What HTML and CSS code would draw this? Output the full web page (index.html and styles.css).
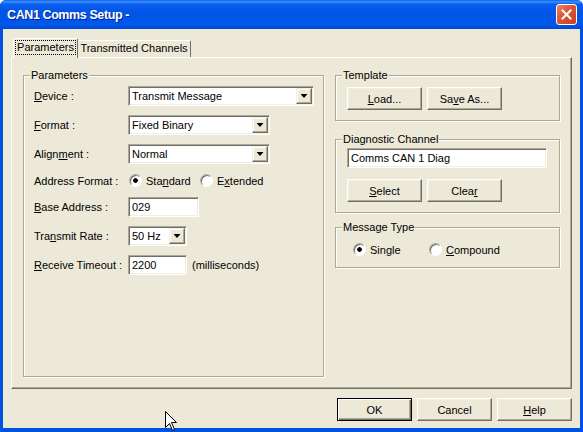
FILE: index.html
```html
<!DOCTYPE html>
<html lang="en">
<head>
  <meta charset="UTF-8" />
  <title>CAN1 Comms Setup</title>
  <link rel="stylesheet" href="styles.css">
</head>
<body>

<div class="window">

  <!-- Title bar -->
  <div class="titlebar">
    <span class="title">CAN1 Comms Setup -</span>
    <span class="close">
      <svg width="11" height="11" viewBox="0 0 11 11">
        <path d="M1.5 1.5 L9.5 9.5 M9.5 1.5 L1.5 9.5" stroke="#fff" stroke-width="2" stroke-linecap="square"/>
      </svg>
    </span>
  </div>

  <div class="client">

    <div class="tabs">
      <div class="tab tab--active"><span class="focus">Parameters</span></div>
      <div class="tab tab--channels">Transmitted Channels</div>
    </div>

    <div class="panel">

      <fieldset class="group group--params">
        <legend>Parameters</legend>
        <div class="form">
          <label><u>D</u>evice :</label>
          <div class="combo combo--device"><span>Transmit Message</span><span class="drop"></span></div>

          <label><u>F</u>ormat :</label>
          <div class="combo combo--format"><span>Fixed Binary</span><span class="drop"></span></div>

          <label>Align<u>m</u>ent :</label>
          <div class="combo combo--format"><span>Normal</span><span class="drop"></span></div>

          <label>Address Format :</label>
          <div class="radios radios--address">
            <span class="radio radio--on"><i></i><span>Sta<u>n</u>dard</span></span>
            <span class="radio"><i></i><span>E<u>x</u>tended</span></span>
          </div>

          <label><u>B</u>ase Address :</label>
          <div><input class="field field--base" type="text" value="029"></div>

          <label>Tra<u>n</u>smit Rate :</label>
          <div class="combo combo--rate"><span>50 Hz</span><span class="drop"></span></div>

          <label><u>R</u>eceive Timeout :</label>
          <div class="inline">
            <input class="field field--timeout" type="text" value="2200">
            <span>(milliseconds)</span>
          </div>
        </div>
      </fieldset>

      <div class="side">
        <fieldset class="group">
          <legend>Template</legend>
          <div class="group__body group__body--template">
            <button class="btn"><u>L</u>oad...</button>
            <button class="btn">Sa<u>v</u>e As...</button>
          </div>
        </fieldset>

        <fieldset class="group group--diag">
          <legend>Diagnostic Channel</legend>
          <div class="group__body group__body--diag">
            <input class="field field--diag" type="text" value="Comms CAN 1 Diag">
            <div class="btn-row">
              <button class="btn"><u>S</u>elect</button>
              <button class="btn">Clea<u>r</u></button>
            </div>
          </div>
        </fieldset>

        <fieldset class="group group--msg">
          <legend>Message Type</legend>
          <div class="group__body group__body--msg radios radios--msg">
            <span class="radio radio--on"><i></i><span>Sin<u>g</u>le</span></span>
            <span class="radio"><i></i><span><u>C</u>ompound</span></span>
          </div>
        </fieldset>
      </div>

    </div>

    <div class="actions">
      <button class="btn btn--default">OK</button>
      <button class="btn">Cancel</button>
      <button class="btn"><u>H</u>elp</button>
    </div>

  </div>

  <!-- mouse pointer -->
  <svg class="cursor" width="13" height="21" viewBox="0 0 13 21">
    <path d="M0.5 0.5 L0.5 16.5 L4.5 12.5 L7.5 19.5 L9.5 18.5 L6.5 11.5 L11.5 11.5 Z" fill="#fff" stroke="#000" stroke-width="1"/>
  </svg>

</div>

</body>
</html>
```

FILE: styles.css
```css
* {
  box-sizing: border-box;
}

body {
  margin: 0;
  width: 583px;
  height: 432px;
  overflow: hidden;
  background: #fff;
  font-family: "Liberation Sans", Arial, sans-serif;
  font-size: 11px;
  color: #000;
}

.window {
  position: relative;
  width: 583px;
  height: 432px;
  display: flex;
  flex-direction: column;
  background: #0053e1;
  border-radius: 6px 6px 0 0;
  overflow: hidden;
}

/* title bar */
.titlebar {
  height: 29px;
  flex-shrink: 0;
  display: flex;
  align-items: center;
  justify-content: space-between;
  padding: 0 6px 0 7px;
  background: linear-gradient(to bottom, #0a62f0 0%, #3d8ff8 6%, #0b5eef 14%, #0055e5 45%, #0057ea 85%, #0048d2 100%);
}

.title {
  color: #fff;
  font-weight: bold;
  font-size: 12.5px;
  letter-spacing: -0.4px;
  text-shadow: 1px 1px 0 #0a1f8c;
}

.close {
  width: 21px;
  height: 21px;
  display: flex;
  align-items: center;
  justify-content: center;
  border: 1px solid #fff;
  border-radius: 3px;
  background: linear-gradient(135deg, #e88463 0%, #dd5532 45%, #c7401e 100%);
}

/* dialog body */
.client {
  flex: 1;
  margin: 0 3px 4px;
  padding: 9px 8px 7px;
  background: #ece9d8;
  display: flex;
  flex-direction: column;
}

.tabs {
  height: 19px;
  display: flex;
  align-items: flex-end;
  padding-left: 2px;
  position: relative;
  z-index: 1;
}

.tab {
  height: 17px;
  line-height: 15px;
  text-align: center;
  background: #ece9d8;
  border: 1px solid;
  border-color: #fff #716f64 transparent #fff;
  border-bottom: none;
  border-radius: 2px 2px 0 0;
}

.tab--active {
  width: 65px;
  height: 20px;
  margin-bottom: -1px;
  padding: 1px 1px 0;
}

.tab--channels {
  width: 113px;
  border-left: none;
}

.focus {
  display: block;
  height: 15px;
  line-height: 13px;
  border: 1px dotted #000;
}

.panel {
  height: 332px;
  display: flex;
  gap: 11px;
  padding: 11px;
  border: 1px solid;
  border-color: #fff #716f64 #716f64 #fff;
  box-shadow: inset -1px -1px 0 #aca899;
}

/* group boxes */
.group {
  margin: 0;
  padding: 0;
  min-width: 0;
  border: 1px solid #aca899;
  box-shadow: inset 1px 1px 0 #fff, 1px 1px 0 #fff;
}

.group legend {
  margin-left: 6px;
  padding: 0 1px;
  height: 13px;
  line-height: 13px;
  background: #ece9d8;
}

.group--params {
  width: 301px;
  flex-shrink: 0;
}

.form {
  display: grid;
  grid-template-columns: 94px 1fr;
  grid-template-rows: 20px 20px 20px 15px 20px 20px 20px;
  row-gap: 9px;
  align-items: center;
  padding: 4px 10px 0;
}

.side {
  flex: 1;
  display: flex;
  flex-direction: column;
}

.group--diag {
  margin-top: 12px;
}

.group--msg {
  margin-top: 8px;
}

.group__body--template {
  display: flex;
  gap: 5px;
  padding: 5px 0 10px 11px;
}

.group__body--diag {
  padding: 2px 0 10px 11px;
}

.group__body--msg {
  padding: 9px 0 11px 17px;
}

.btn-row {
  display: flex;
  gap: 5px;
  margin-top: 11px;
}

/* controls */
.combo {
  height: 20px;
  display: flex;
  align-items: center;
  padding: 1px 1px 1px 3px;
  background: #fff;
  border: 1px solid;
  border-color: #aca899 #fff #fff #aca899;
  box-shadow: inset 1px 1px 0 #716f64, inset -1px -1px 0 #f1efe2;
}

.combo span:first-child {
  flex: 1;
}

.combo--device {
  width: 186px;
}

.combo--format {
  width: 142px;
}

.combo--rate {
  width: 59px;
}

.drop {
  width: 16px;
  height: 16px;
  display: flex;
  align-items: center;
  justify-content: center;
  background: #ece9d8;
  border: 1px solid;
  border-color: #f1efe2 #716f64 #716f64 #f1efe2;
  box-shadow: inset -1px -1px 0 #aca899, inset 1px 1px 0 #fff;
}

.drop::after {
  content: "";
  width: 7px;
  height: 4px;
  background: #000;
  clip-path: polygon(0 0, 100% 0, 50% 100%);
}

.field {
  display: block;
  height: 20px;
  padding: 0 3px;
  font: inherit;
  color: #000;
  background: #fff;
  border: 1px solid;
  border-color: #aca899 #fff #fff #aca899;
  box-shadow: inset 1px 1px 0 #716f64, inset -1px -1px 0 #f1efe2;
  outline: none;
}

.field--base {
  width: 71px;
}

.field--timeout {
  width: 59px;
}

.field--diag {
  width: 200px;
}

.inline {
  display: flex;
  align-items: center;
  gap: 5px;
}

.radios {
  display: flex;
  align-items: center;
}

.radios--address {
  padding-left: 1px;
}

.radios--address .radio {
  width: 71px;
}

.radios--msg .radio {
  width: 76px;
}

.radio {
  display: flex;
  align-items: center;
  gap: 4px;
  height: 13px;
  white-space: nowrap;
}

.radio i {
  width: 13px;
  height: 13px;
  flex-shrink: 0;
  border-radius: 50%;
  border: 1px solid;
  border-color: #aca899 #fff #fff #aca899;
  box-shadow: inset 1px 1px 0 #716f64;
  background: #fff;
}

.radio--on i {
  background: radial-gradient(circle, #000 0 2px, #fff 2.6px);
}

.btn {
  width: 75px;
  height: 23px;
  padding: 0;
  font: inherit;
  color: #000;
  background: #ece9d8;
  border: 1px solid;
  border-color: #fff #716f64 #716f64 #fff;
  box-shadow: inset -1px -1px 0 #aca899, inset 1px 1px 0 #f1efe2;
}

.btn--default {
  border-color: #000;
  box-shadow: inset 1px 1px 0 #fff, inset -1px -1px 0 #716f64, inset -2px -2px 0 #aca899;
}

.actions {
  display: flex;
  justify-content: flex-end;
  gap: 5px;
  margin-top: 9px;
}

.cursor {
  position: absolute;
  left: 165px;
  top: 411px;
}
```
